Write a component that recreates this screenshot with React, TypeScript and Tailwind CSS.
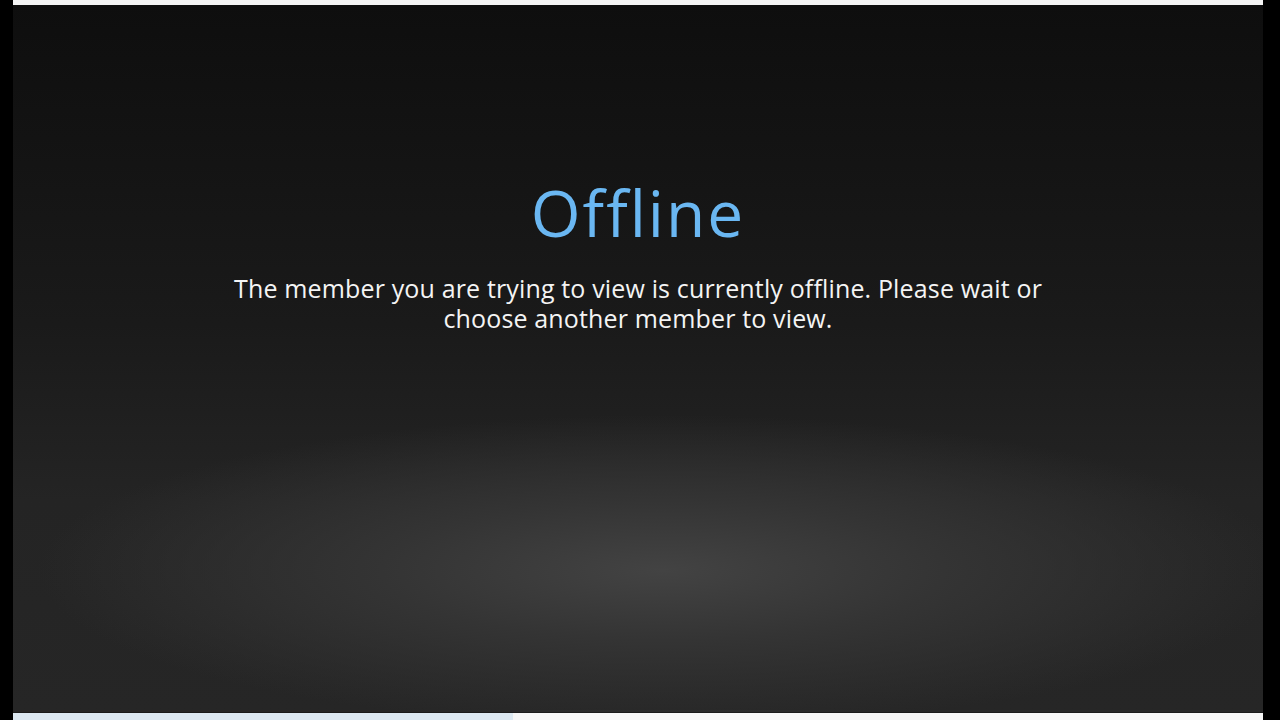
export default function App() {
  return (
    <div className="flex h-screen w-full bg-black">
      <div className="ml-[13px] flex w-[1250px] flex-col">
        <div className="h-[5px] bg-[#f4f4f4]" />
        <main className="flex flex-1 flex-col items-center bg-[radial-gradient(ellipse_50%_22%_at_52%_80%,#434343_0%,#343434_45%,rgba(40,40,40,0)_100%),linear-gradient(to_bottom,#0e0e0e_0%,#1a1a1a_45%,#242424_70%,#262626_100%)] pt-[172px] font-['Open_Sans',sans-serif]">
          <h1 className="text-[64px] leading-[72px] tracking-[2px] text-[#6ab7f2]">Offline</h1>
          <p className="mt-[24px] w-[850px] text-center text-[25px] leading-[30px] tracking-[0.15px] text-[#f4f4f4]">
            The member you are trying to view is currently offline. Please wait or choose another member to view.
          </p>
        </main>
        <div className="h-px bg-[#1a1a1a]" />
        <div className="flex h-[7px]">
          <div className="w-[500px] bg-[#dce8f1]" />
          <div className="flex-1 bg-[#f6f6f6]" />
        </div>
      </div>
    </div>
  );
}
